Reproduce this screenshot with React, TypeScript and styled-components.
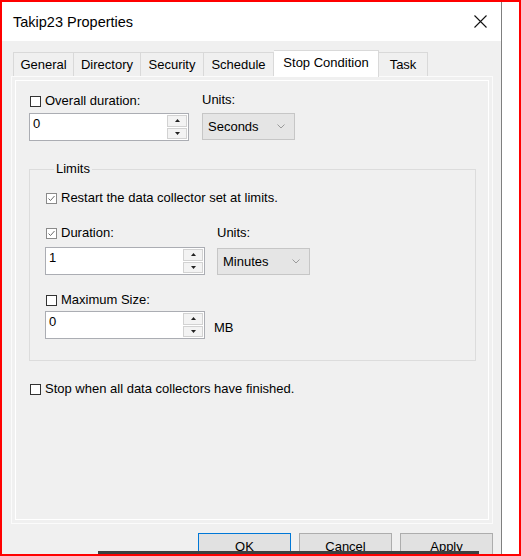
import styled, {createGlobalStyle} from "styled-components"

const GlobalStyle = createGlobalStyle`
    html, body {
        margin: 0;
        padding: 0;
        background: #fff;
    }

    * {
        box-sizing: border-box;
    }
`

const tabs = [
    {name: "General", width: 61},
    {name: "Directory", width: 67},
    {name: "Security", width: 63},
    {name: "Schedule", width: 70},
    {name: "Stop Condition", width: 105},
    {name: "Task", width: 49},
]
const activeTab = "Stop Condition"

const CheckBox = ({checked}: { checked?: boolean }) => (
    <Box $checked={checked}>
        {checked && (
            <svg width="9" height="9" viewBox="0 0 9 9">
                <path d="M1.5 4.5 L3.5 6.5 L7.5 2" fill="none" stroke="#6b6b6b" strokeWidth="1"/>
            </svg>
        )}
    </Box>
)

const Check = ({label, checked}: { label: string, checked?: boolean }) => (
    <CheckRow>
        <CheckBox checked={checked}/>
        <span>{label}</span>
    </CheckRow>
)

const Spin = ({value}: { value: string }) => (
    <SpinBox>
        <SpinValue>{value}</SpinValue>
        <SpinButtons>
            <SpinButton>
                <svg width="5" height="3" viewBox="0 0 5 3"><path d="M2.5 0 L5 3 L0 3 Z" fill="#222"/></svg>
            </SpinButton>
            <SpinButton>
                <svg width="5" height="3" viewBox="0 0 5 3"><path d="M0 0 L5 0 L2.5 3 Z" fill="#222"/></svg>
            </SpinButton>
        </SpinButtons>
    </SpinBox>
)

const Combo = ({value}: { value: string }) => (
    <ComboBox>
        <span>{value}</span>
        <svg width="8" height="5" viewBox="0 0 8 5">
            <path d="M0.5 0.5 L4 4 L7.5 0.5" fill="none" stroke="#9a9a9a" strokeWidth="1"/>
        </svg>
    </ComboBox>
)

export default function App() {
    return (
        <>
            <GlobalStyle/>
            <Frame>
                <Dialog>
                    <TitleBar>
                        <Title>Takip23 Properties</Title>
                        <svg width="13" height="13" viewBox="0 0 13 13">
                            <path d="M0.5 0.5 L12.5 12.5 M12.5 0.5 L0.5 12.5" stroke="#111" strokeWidth="1.1"/>
                        </svg>
                    </TitleBar>
                    <Body>
                        <TabStrip>
                            {tabs.map((t) => (
                                <Tab key={t.name} $active={t.name === activeTab} $width={t.width}>{t.name}</Tab>
                            ))}
                        </TabStrip>
                        <Panel>
                            <Row $top={16}>
                                <Column>
                                    <Check label="Overall duration:"/>
                                    <Control $gap={4}><Spin value="0"/></Control>
                                </Column>
                                <Column $shift={-1}>
                                    <Label>Units:</Label>
                                    <Control $gap={5}><Combo value="Seconds"/></Control>
                                </Column>
                            </Row>

                            <Group>
                                <Legend>Limits</Legend>
                                <Item $top={13}>
                                    <Check label="Restart the data collector set at limits." checked/>
                                </Item>
                                <Row $top={19} $gap={12}>
                                    <Column>
                                        <Check label="Duration:" checked/>
                                        <Control $gap={6}><Spin value="1"/></Control>
                                    </Column>
                                    <Column>
                                        <Label>Units:</Label>
                                        <Control $gap={7}><Combo value="Minutes"/></Control>
                                    </Column>
                                </Row>
                                <Row $top={17} $gap={9}>
                                    <Column>
                                        <Check label="Maximum Size:"/>
                                        <Control $gap={3}><Spin value="0"/></Control>
                                    </Column>
                                    <Unit>MB</Unit>
                                </Row>
                            </Group>

                            <Item $top={20}>
                                <Check label="Stop when all data collectors have finished."/>
                            </Item>
                        </Panel>
                        <ButtonRow>
                            <Button $default>OK</Button>
                            <Button>Cancel</Button>
                            <Button>Apply</Button>
                        </ButtonRow>
                    </Body>
                </Dialog>
                <SideStrip/>
                <TaskBar/>
            </Frame>
        </>
    )
}

const Frame = styled.div`
    position: relative;
    display: flex;
    width: 521px;
    height: 556px;
    overflow: hidden;

    border: 2px solid #f00;
    background: #fff;

    font-family: "Liberation Sans", Arial, sans-serif;
    font-size: 13px;
    color: #000;
`

const Dialog = styled.div`
    display: flex;
    flex-direction: column;
    width: 500px;
    flex-shrink: 0;

    border-right: 1px solid #7f7f7f;
`

const SideStrip = styled.div`
    flex: 1;
    background: #fff;
`

const TaskBar = styled.div`
    position: absolute;
    left: 96px;
    bottom: 0;
    width: 381px;
    height: 3px;

    background: #3f3f3f;
`

const TitleBar = styled.div`
    display: flex;
    align-items: center;
    justify-content: space-between;
    flex-shrink: 0;
    height: 39px;
    padding: 0 14px 0 11px;

    background: #fff;
`

const Title = styled.span`
    font-size: 14.5px;
    margin-top: 1px;
`

const Body = styled.div`
    flex: 1;
    min-height: 0;
    padding: 9px 8px 0 9px;

    background: #f0f0f0;
`

const TabStrip = styled.div`
    display: flex;
    align-items: flex-end;
    height: 26px;
    padding-left: 2px;
    position: relative;
    z-index: 1;
`

const Tab = styled.div<{ $active?: boolean, $width: number }>`
    display: flex;
    align-items: center;
    justify-content: center;
    flex-shrink: 0;
    width: ${p => p.$width}px;
    height: ${p => p.$active ? "27px" : "24px"};
    margin-bottom: ${p => p.$active ? "-1px" : "0"};
    padding-bottom: ${p => p.$active ? "3px" : "0"};

    border: 1px solid #d9d9d9;
    border-left-width: 0;
    border-bottom: none;
    background: ${p => p.$active ? "#fff" : "#f0f0f0"};

    &:first-child {
        border-left-width: 1px;
    }
`

const Panel = styled.div`
    height: 448px;
    padding: 0 0 0 17px;

    border: 1px solid #fbfbfb;
    box-shadow: inset 0 0 0 3px #f0f0f0, inset 0 0 0 4px #fff;
    background: #f0f0f0;
`

const Row = styled.div<{ $top?: number, $gap?: number }>`
    display: flex;
    align-items: flex-start;
    gap: ${p => p.$gap ?? 13}px;
    margin-top: ${p => p.$top ?? 0}px;
`

const Column = styled.div<{ $shift?: number }>`
    display: flex;
    flex-direction: column;
    margin-top: ${p => p.$shift ?? 0}px;
`

const Control = styled.div<{ $gap: number }>`
    margin-top: ${p => p.$gap}px;
`

const Item = styled.div<{ $top: number }>`
    margin-top: ${p => p.$top}px;
`

const Label = styled.span`
    height: 16px;
    line-height: 16px;
`

const Unit = styled.span`
    line-height: 16px;
    margin-top: 28px;
`

const CheckRow = styled.label`
    display: flex;
    align-items: center;
    gap: 4px;
    height: 16px;
    line-height: 16px;
    white-space: nowrap;
`

const Box = styled.span<{ $checked?: boolean }>`
    display: flex;
    align-items: center;
    justify-content: center;
    width: 11px;
    height: 11px;
    margin-left: 1px;

    border: 1px solid ${p => p.$checked ? "#8a8a8a" : "#333"};
    background: #fff;
`

const SpinBox = styled.div`
    display: flex;
    width: 160px;
    height: 28px;

    border: 1px solid #abadb3;
    background: #fff;
`

const SpinValue = styled.span`
    flex: 1;
    padding: 2px 0 0 3px;
    line-height: 16px;
`

const SpinButtons = styled.div`
    display: flex;
    flex-direction: column;
    width: 22px;
    padding: 1px;
    gap: 1px;
`

const SpinButton = styled.div`
    display: flex;
    align-items: center;
    justify-content: center;
    flex: 1;

    border: 1px solid #d2d2d2;
    background: #f3f3f3;
`

const ComboBox = styled.div`
    display: flex;
    align-items: center;
    justify-content: space-between;
    width: 93px;
    height: 27px;
    padding: 0 9px 0 5px;

    border: 1px solid #c6c6c6;
    background: #e5e5e5;
`

const Group = styled.fieldset`
    width: 447px;
    margin: 20px 0 0 0;
    padding: 0 0 21px 15px;

    border: 1px solid #dcdcdc;
    border-radius: 0;
`

const Legend = styled.legend`
    margin-left: 9px;
    padding: 0 2px;
    line-height: 16px;
`

const ButtonRow = styled.div`
    display: flex;
    justify-content: flex-end;
    gap: 8px;
    margin-top: 9px;
`

const Button = styled.button<{ $default?: boolean }>`
    width: 93px;
    height: 26px;
    padding: 0;

    font-family: inherit;
    font-size: 13px;
    color: #000;

    border: 1px solid ${p => p.$default ? "#0078d7" : "#adadad"};
    background: #e1e1e1;
`
